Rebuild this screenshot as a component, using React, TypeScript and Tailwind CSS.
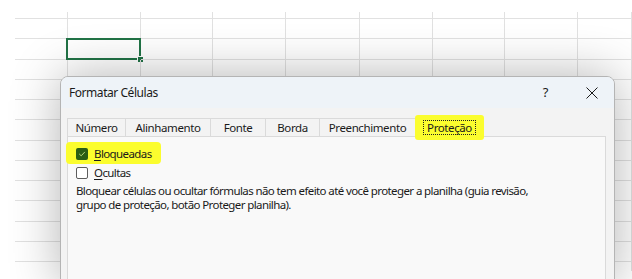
const rowHeights = [
  "h-[7px]",
  "h-[20px]",
  "h-[21px]",
  "h-[20px]",
  "h-[20px]",
  "h-[20px]",
  "h-[21px]",
  "h-[20px]",
  "h-[20px]",
  "h-[20px]",
  "h-[21px]",
  "h-[20px]",
  "h-[20px]",
  "h-[20px]",
];

const colCount = 9;

const tabs = [
  { label: "Número", w: "w-[58px]" },
  { label: "Alinhamento", w: "w-[85px]" },
  { label: "Fonte", w: "w-[55px]" },
  { label: "Borda", w: "w-[54px]" },
  { label: "Preenchimento", w: "w-[96px]" },
];

function Sheet() {
  return (
    <div className="h-[271px] overflow-hidden pt-[12px] pl-[15px]">
      <div className="grid grid-cols-[53px_73px_72px_73px_74px_73px_72px_73px_1fr]">
        {rowHeights.map((h, r) =>
          Array.from({ length: colCount }).map((_, c) => (
            <div key={`${r}-${c}`} className={`${h} relative border-r border-b border-[#e1e1e1]`}>
              {r === 2 && c === 1 && (
                <div className="absolute -left-[2px] -top-[1px] -right-[1px] -bottom-[1px] border-2 border-[#217346]">
                  <div className="absolute -right-[4px] -bottom-[4px] h-[5px] w-[5px] bg-[#217346] outline outline-1 outline-white" />
                </div>
              )}
            </div>
          ))
        )}
      </div>
    </div>
  );
}

function CloseIcon() {
  return (
    <svg width="12" height="12" viewBox="0 0 12 12" fill="none" stroke="#1a1a1a" strokeWidth="1">
      <path d="M0.5 0.5L11.5 11.5M11.5 0.5L0.5 11.5" />
    </svg>
  );
}

function CheckBox({ checked }: { checked?: boolean }) {
  return checked ? (
    <span className="flex h-[12px] w-[12px] items-center justify-center rounded-[2px] bg-[#2a5e14]">
      <svg width="8" height="8" viewBox="0 0 8 8" fill="none" stroke="#b9d97a" strokeWidth="1" strokeLinecap="round" strokeLinejoin="round">
        <path d="M1.5 4.2L3.2 5.8L6.6 2.2" />
      </svg>
    </span>
  ) : (
    <span className="h-[12px] w-[12px] rounded-[2px] border border-[#5d5d5d] bg-white" />
  );
}

function Dialog() {
  return (
    <div className="absolute left-[60px] top-[76px] h-[210px] w-[555px] overflow-hidden rounded-t-[8px] border border-[#b4b4b4] bg-[#f3f3f3] shadow-[0_0_50px_rgba(0,0,0,0.3)]">
      <div className="flex h-[31px] items-center bg-[#eef3f8] pl-[8px] pr-[16px] text-[12px] tracking-[-0.45px] text-[#1a1a1a]">
        <span className="flex-1">Formatar Células</span>
        <span className="mr-[38px] text-[13px]">?</span>
        <CloseIcon />
      </div>
      <div className="px-[6px] pt-[10px]">
        <div className="flex h-[18px] items-stretch text-[11.5px] tracking-[-0.4px] text-[#1a1a1a]">
          {tabs.map((t) => (
            <div
              key={t.label}
              className={`${t.w} flex items-center justify-center border-l border-t border-[#dadada]`}
            >
              {t.label}
            </div>
          ))}
          <div className="relative flex w-[69px] items-center justify-center border-x border-t border-[#dadada] bg-[#f9f9f9]">
            <span className="absolute -left-[1px] -right-[1px] -top-[4px] -bottom-[4px] rounded-[3px] bg-[#fbfd2e]" />
            <span className="relative border border-dotted border-[#222] px-[3px] leading-[13px]">Proteção</span>
          </div>
        </div>
        <div className="h-[150px] w-[539px] border border-[#dadada] bg-[#f9f9f9] pl-[8px] pt-[9px] text-[11.5px] leading-[15px] tracking-[-0.6px] text-[#1a1a1a]">
          <div className="relative flex h-[15px] items-center">
            <span className="absolute -left-[10px] -top-[4px] h-[22px] w-[95px] rounded-[4px] bg-[#fbfd2e]" />
            <span className="relative flex items-center gap-[6px]">
              <CheckBox checked />
              <span>
                <span className="underline underline-offset-2">B</span>loqueadas
              </span>
            </span>
          </div>
          <div className="mt-[4px] flex h-[15px] items-center gap-[6px]">
            <CheckBox />
            <span>
              <span className="underline underline-offset-2">O</span>cultas
            </span>
          </div>
          <p className="mt-[4px] whitespace-nowrap leading-[14px]">
            Bloquear células ou ocultar fórmulas não tem efeito até você proteger a planilha (guia revisão,
            <br />
            grupo de proteção, botão Proteger planilha).
          </p>
        </div>
      </div>
    </div>
  );
}

export default function App() {
  return (
    <div className="relative h-[279px] w-[632px] overflow-hidden bg-white font-['Noto_Sans',sans-serif]">
      <Sheet />
      <Dialog />
    </div>
  );
}
